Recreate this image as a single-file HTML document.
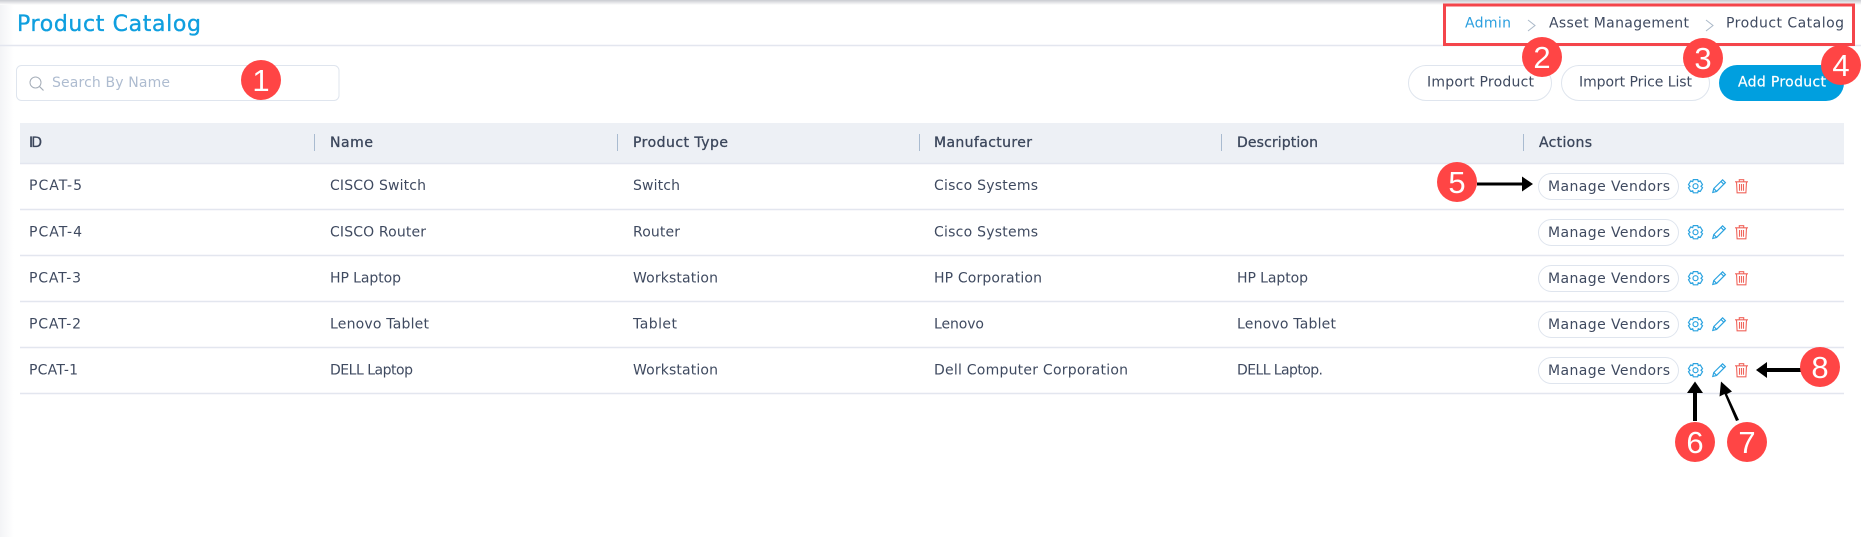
<!DOCTYPE html>
<html><head><meta charset="utf-8"><title>Product Catalog</title>
<style>
html,body{margin:0;padding:0;background:#fff;width:1861px;height:537px;overflow:hidden}
svg{display:block}
text{font-family:"DejaVu Sans","Liberation Sans",sans-serif;font-size:14px;fill:#3f4a60}
.h{stroke:#3c475c;stroke-width:.3px;fill:#3c475c}
.l{stroke:#e3e6ef;stroke-width:1.5}
.s{stroke:#a9bbd0;stroke-width:1}
.n{font-family:"Liberation Sans",sans-serif;font-size:31px;fill:#fff;text-anchor:middle}
.c{fill:#ff4545}
.p{fill:#fff;stroke:#dfe5ee;stroke-width:1}
</style></head><body>
<svg width="1861" height="537" viewBox="0 0 1861 537" xmlns="http://www.w3.org/2000/svg">
<defs>
<linearGradient id="t" x1="0" y1="0" x2="0" y2="1"><stop offset="0" stop-color="#c9cbd0"/><stop offset="1" stop-color="#fff"/></linearGradient>
<linearGradient id="lf" x1="0" y1="0" x2="1" y2="0"><stop offset="0" stop-color="#f3f4f6"/><stop offset="1" stop-color="#fff"/></linearGradient>
<g id="gear" fill="none" stroke="#2ba3e0" stroke-width="1.200"><path d="M5.300 0.600h4.400l.6 2 2-.6 2.200 3.700-1.500 1.500 1.500 1.500-2.200 3.700-2-.6-.6 2H5.300l-.6-2-2 .6L.5 8.700 2 7.200.5 5.700 2.700 2l2 .6z"/><circle cx="7.500" cy="7.200" r="2.500"/></g>
<g id="pen" fill="none" stroke="#2ba3e0" stroke-width="1.200"><path d="M.8 13.400l1-3.900L10.600.8l2.800 2.800-8.800 8.800z"/><path d="M1.800 9.500l2.800 2.900M9 2.400l2.800 2.800"/></g>
<g id="bin" fill="none" stroke="#f0655c" stroke-width="1.100"><path d="M0 2.800h13M4.300 2.800V.7h4.400v2.100M1.500 2.800l.6 11h8.800l.6-11M4.500 5v6.800M6.500 5v6.800M8.500 5v6.800"/></g>
<g id="mv"><rect class="p" x="1538.500" y="0.500" width="140" height="26" rx="13"/><text x="1548" y="18" textLength="122" lengthAdjust="spacing">Manage Vendors</text><use href="#gear" x="1688" y="6"/><use href="#pen" x="1712" y="6"/><use href="#bin" x="1735" y="6"/></g>
</defs>
<rect width="14" height="537" fill="url(#lf)"/>
<rect width="1861" height="5" fill="url(#t)"/>
<text x="17" y="31" textLength="184" lengthAdjust="spacing" style="font-size:22px;fill:#0f9fdf;stroke:#0f9fdf;stroke-width:.35px">Product Catalog</text>
<line x1="0" y1="45.500" x2="1861" y2="45.500" class="l"/>

<text x="1465" y="27.500" textLength="46" lengthAdjust="spacing" style="fill:#2b9fdf">Admin</text>
<path d="M1528 20l7 5.500-7 5.500" fill="none" stroke="#aab8c8" stroke-width="1"/>
<text x="1549" y="27.500" textLength="140" lengthAdjust="spacing">Asset Management</text>
<path d="M1706 20l7 5.500-7 5.500" fill="none" stroke="#aab8c8" stroke-width="1"/>
<text x="1726" y="27.500" textLength="118" lengthAdjust="spacing">Product Catalog</text>
<rect x="1444.500" y="5" width="409" height="39.500" fill="none" stroke="#f4454b" stroke-width="3"/>

<rect class="p" x="16.500" y="65.500" width="322.500" height="35" rx="5"/>
<circle cx="35.500" cy="82.500" r="5.500" fill="none" stroke="#a5adb8" stroke-width="1"/><path d="M39.500 86.500l4 4" stroke="#a5adb8" stroke-width="1.200"/>
<text x="52" y="87" textLength="118" lengthAdjust="spacing" style="fill:#aebcd0">Search By Name</text>

<rect class="p" x="1408.500" y="65.500" width="143" height="35" rx="17.500"/>
<text x="1427" y="86.500" textLength="107" lengthAdjust="spacing">Import Product</text>
<rect class="p" x="1561.500" y="65.500" width="148" height="35" rx="17.500"/>
<text x="1579" y="86.500" textLength="113" lengthAdjust="spacing">Import Price List</text>
<rect x="1719" y="65" width="125" height="36" rx="18" fill="#009fdf"/>
<text x="1738" y="86.500" textLength="88" lengthAdjust="spacing" style="fill:#fff;stroke:#fff;stroke-width:.2px">Add Product</text>

<rect x="20" y="123" width="1824" height="40" fill="#edf0f5"/>
<line x1="20" y1="163.500" x2="1844" y2="163.500" class="l"/>
<line x1="314.500" y1="134" x2="314.500" y2="151" class="s"/>
<line x1="617.500" y1="134" x2="617.500" y2="151" class="s"/>
<line x1="919.500" y1="134" x2="919.500" y2="151" class="s"/>
<line x1="1221.500" y1="134" x2="1221.500" y2="151" class="s"/>
<line x1="1523.500" y1="134" x2="1523.500" y2="151" class="s"/>
<text class="h" x="29" y="147" textLength="13" lengthAdjust="spacing">ID</text>
<text class="h" x="330" y="147" textLength="43" lengthAdjust="spacing">Name</text>
<text class="h" x="633" y="147" textLength="95" lengthAdjust="spacing">Product Type</text>
<text class="h" x="934" y="147" textLength="98" lengthAdjust="spacing">Manufacturer</text>
<text class="h" x="1237" y="147" textLength="81" lengthAdjust="spacing">Description</text>
<text class="h" x="1539" y="147" textLength="53" lengthAdjust="spacing">Actions</text>

<line x1="20" y1="209.500" x2="1844" y2="209.500" class="l"/>
<line x1="20" y1="255.500" x2="1844" y2="255.500" class="l"/>
<line x1="20" y1="301.500" x2="1844" y2="301.500" class="l"/>
<line x1="20" y1="347.500" x2="1844" y2="347.500" class="l"/>
<line x1="20" y1="393.500" x2="1844" y2="393.500" class="l"/>

<text x="29" y="190" textLength="53" lengthAdjust="spacing">PCAT-5</text>
<text x="330" y="190" textLength="96" lengthAdjust="spacing">CISCO Switch</text>
<text x="633" y="190" textLength="47" lengthAdjust="spacing">Switch</text>
<text x="934" y="190" textLength="104" lengthAdjust="spacing">Cisco Systems</text>

<text x="29" y="236.500" textLength="53" lengthAdjust="spacing">PCAT-4</text>
<text x="330" y="236.500" textLength="96" lengthAdjust="spacing">CISCO Router</text>
<text x="633" y="236.500" textLength="47" lengthAdjust="spacing">Router</text>
<text x="934" y="236.500" textLength="104" lengthAdjust="spacing">Cisco Systems</text>

<text x="29" y="282.500" textLength="52" lengthAdjust="spacing">PCAT-3</text>
<text x="330" y="282.500" textLength="71" lengthAdjust="spacing">HP Laptop</text>
<text x="633" y="282.500" textLength="85" lengthAdjust="spacing">Workstation</text>
<text x="934" y="282.500" textLength="108" lengthAdjust="spacing">HP Corporation</text>
<text x="1237" y="282.500" textLength="71" lengthAdjust="spacing">HP Laptop</text>

<text x="29" y="328.500" textLength="52" lengthAdjust="spacing">PCAT-2</text>
<text x="330" y="328.500" textLength="99" lengthAdjust="spacing">Lenovo Tablet</text>
<text x="633" y="328.500" textLength="44" lengthAdjust="spacing">Tablet</text>
<text x="934" y="328.500" textLength="50" lengthAdjust="spacing">Lenovo</text>
<text x="1237" y="328.500" textLength="99" lengthAdjust="spacing">Lenovo Tablet</text>

<text x="29" y="374.500" textLength="49" lengthAdjust="spacing">PCAT-1</text>
<text x="330" y="374.500" textLength="83" lengthAdjust="spacing">DELL Laptop</text>
<text x="633" y="374.500" textLength="85" lengthAdjust="spacing">Workstation</text>
<text x="934" y="374.500" textLength="194" lengthAdjust="spacing">Dell Computer Corporation</text>
<text x="1237" y="374.500" textLength="86" lengthAdjust="spacing">DELL Laptop.</text>

<use href="#mv" y="173"/>
<use href="#mv" y="219"/>
<use href="#mv" y="265"/>
<use href="#mv" y="311"/>
<use href="#mv" y="357"/>

<path d="M1477 182.500h45v-6l11 7.500-11 7.500v-6h-45z" fill="#000"/>
<path d="M1693 421v-28h-6l8-11.500 8 11.500h-6v28z" fill="#000"/>
<path d="M1736 421l-11.500-27-5 2.500 1.500-15 11 10-5 2.500 12 26z" fill="#000"/>
<path d="M1803 368h-36v-6l-11 8 11 8v-6h36z" fill="#000"/>

<circle class="c" cx="261" cy="80" r="20"/><text class="n" x="261" y="91">1</text>
<circle class="c" cx="1542" cy="57" r="20"/><text class="n" x="1542" y="68">2</text>
<circle class="c" cx="1703" cy="58" r="20"/><text class="n" x="1703" y="69">3</text>
<circle class="c" cx="1841" cy="65" r="20"/><text class="n" x="1841" y="76">4</text>
<circle class="c" cx="1457" cy="182" r="20"/><text class="n" x="1457" y="193">5</text>
<circle class="c" cx="1695" cy="442" r="20"/><text class="n" x="1695" y="453">6</text>
<circle class="c" cx="1747" cy="442" r="20"/><text class="n" x="1747" y="453">7</text>
<circle class="c" cx="1820" cy="367" r="20"/><text class="n" x="1820" y="378">8</text>
</svg>
</body></html>
